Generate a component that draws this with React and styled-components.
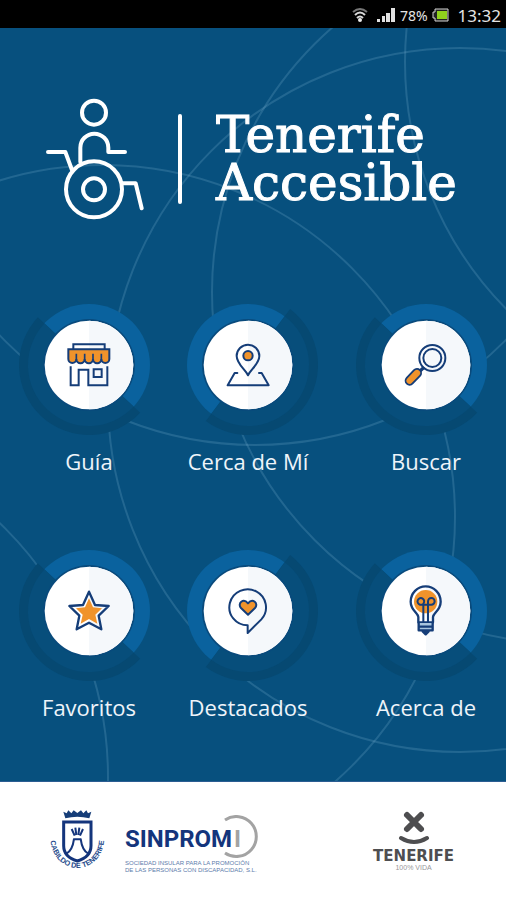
import React from "react";
import styled, { createGlobalStyle } from "styled-components";

const NAVY = "#153d78";
const ORANGE = "#f0932b";

const GlobalStyle = createGlobalStyle`
  *, *::before, *::after { box-sizing: border-box; }
  body { margin: 0; background: #07507e; }
`;

const Screen = styled.div`
  min-height: 100vh;
  display: flex;
  flex-direction: column;
  font-family: "Open Sans", "Noto Sans", sans-serif;
`;

const StatusBar = styled.header`
  height: 28px;
  padding: 2px 5px 0 0;
  background: #000;
  color: #e4e4e4;
  display: flex;
  align-items: center;
  justify-content: flex-end;
  font-family: "Noto Sans", sans-serif;
`;

const StatusIcon = styled.svg`
  display: block;
  width: ${(p) => p.$width}px;
  height: 16px;
  margin-right: ${(p) => p.$gap}px;
`;

const Battery = styled.span`
  font-size: 14px;
  margin-right: 4px;
`;

const Clock = styled.time`
  font-size: 17px;
`;

const Main = styled.main`
  flex: 1;
  position: relative;
  overflow: hidden;
  isolation: isolate;
  background: #07507e;
  color: #fff;
`;

const Backdrop = styled.svg`
  position: absolute;
  z-index: -1;
  inset: 0;
  width: 100%;
  height: 100%;
  fill: none;
  stroke: #8fc3e0;
  stroke-opacity: 0.2;
  stroke-width: 2;
`;

const Brand = styled.div`
  display: flex;
  align-items: center;
  padding: 70px 20px 0 46px;
`;

const BrandMark = styled.svg`
  width: 98px;
  height: 122px;
  fill: none;
  stroke: #fff;
  stroke-width: 12;
  stroke-linecap: round;
  stroke-linejoin: round;
`;

const Divider = styled.span`
  width: 4px;
  height: 90px;
  margin: 0 34px;
  border-radius: 2px;
  background: #fff;
`;

const Title = styled.h1`
  margin: 0;
  font-family: "DejaVu Serif", serif;
  font-size: 50px;
  line-height: 48px;
  font-weight: 400;
  -webkit-text-stroke: 1px #fff;
`;

const Menu = styled.nav`
  display: grid;
  grid-template-columns: 178fr 140fr 178fr;
  justify-items: center;
  row-gap: 64px;
  padding: 75px 10px 57px 0;
`;

const Tile = styled.button`
  display: flex;
  flex-direction: column;
  align-items: center;
  gap: 10px;
  width: 140px;
  padding: 0;
  border: 0;
  background: none;
  color: #eef4fa;
  font: inherit;
  font-size: 22px;
  line-height: 32px;
  white-space: nowrap;
  cursor: pointer;

  &:nth-child(3n) {
    justify-self: end;
  }
`;

const Dial = styled.svg`
  display: block;
  width: 140px;
  height: 140px;
`;

const Footer = styled.footer`
  min-height: 119px;
  padding: 27px 52px 0 47px;
  background: #fff;
  border-top: 1px solid #2b5d92;
  display: flex;
  align-items: flex-start;
`;

const Emblem = styled.svg`
  width: 60px;
  height: 66px;
`;

const Sinpromi = styled.div`
  margin: 6px 0 0 18px;
  color: #5c7bab;
  font-family: "Liberation Sans", sans-serif;
  font-size: 6px;
  line-height: 7px;
`;

const Wordmark = styled.svg`
  display: block;
  width: 134px;
  height: 44px;
  font-family: Roboto, sans-serif;
  font-weight: 700;
  font-size: 24px;
`;

const Caption = styled.p`
  margin: 1px 0 0;
  white-space: nowrap;
`;

const Tenerife = styled.div`
  margin-left: auto;
  display: flex;
  flex-direction: column;
  align-items: center;
  color: #4e4e50;
  font-family: "DejaVu Sans", sans-serif;
`;

const Smile = styled.svg`
  width: 34px;
  height: 36px;
  margin-top: 1px;
  fill: none;
  stroke: #4e4e50;
  stroke-linecap: round;
`;

const PlaceName = styled.strong`
  font-size: 15px;
  line-height: 16px;
  margin-top: 2px;
`;

const Slogan = styled.small`
  font-family: "Liberation Sans", sans-serif;
  font-size: 7px;
  line-height: 8px;
  color: #98989a;
`;

const line = {
  fill: "none",
  stroke: NAVY,
  strokeWidth: 7,
  strokeLinejoin: "round",
  strokeLinecap: "round",
};

const ShopIcon = () => (
  <g {...line} strokeWidth="6" strokeLinejoin="miter" strokeLinecap="butt">
    <path d="M-47-48V-62H47V-48" />
    <path
      fill={ORANGE}
      d="M-62-47H61V-18a12 12 0 0 1-24 0a12 12 0 0 1-25 0a12 12 0 0 1-25 0a12 12 0 0 1-25 0a12 12 0 0 1-24 0Z"
    />
    <path strokeWidth="5" d="M-38-34V-16M-13-34V-16M12-34V-16M37-34V-16" />
    <path d="M-55 4V61H-31V14H-2V61H55V4M14 13H38V36H14Z" />
  </g>
);

const PinIcon = () => (
  <g {...line} strokeWidth="6">
    <path d="M0 31C-8 14-34-4-34-27A34 34 0 0 1 34-27C34-4 8 14 0 31Z" />
    <circle cy="-28" r="14" fill={ORANGE} />
    <path d="M-32 24H-40L-61 61H62L41 24H33" />
  </g>
);

const SearchIcon = () => (
  <g {...line} strokeWidth="6">
    <circle cx="19" cy="-21" r="39" />
    <circle cx="19" cy="-21" r="27" />
    <path d="M-9 10L-18 18" strokeWidth="10" />
    <path d="M-27 24L-49 47" strokeWidth="30" />
    <path d="M-27 24L-49 47" strokeWidth="19" stroke={ORANGE} />
  </g>
);

const StarIcon = () => (
  <g {...line}>
    <path d="M0-58L18-18L59-15L29 14L37 55L0 35L-37 55L-29 14L-59-15L-18-18Z" />
    <path
      fill={ORANGE}
      stroke="none"
      d="M0-38L12-11L39-8L19 11L25 38L0 24L-25 38L-19 11L-39-8L-12-11Z"
    />
  </g>
);

const HeartIcon = () => (
  <g {...line} strokeWidth="6">
    <path d="M-1 43A55 54 0 1 1 40 25L-1 66Z" />
    <path
      fill={ORANGE}
      d="M0 11L-21-9C-33-23-14-40 0-23C14-40 33-23 21-9Z"
    />
  </g>
);

const BulbIcon = () => (
  <g {...line}>
    <circle cx="-1" cy="-28" r="35" fill={ORANGE} stroke="none" />
    <path d="M-23 34V18C-23 7-46-2-46-28A45 46 0 0 1 44-28C44-2 21 7 21 18V34Z" />
    <path d="M-8 32V-22A10 10 0 1 0-18-19H16A10 10 0 1 0 6-29V32" strokeWidth="6" />
    <path d="M-22 36V58H20V36M-22 47H20M-10 61L-1 70L8 61Z" fill="#a9c6df" />
  </g>
);

const items = [
  { label: "Guía", Icon: ShopIcon, angle: 43 },
  { label: "Cerca de Mí", Icon: PinIcon, angle: -53 },
  { label: "Buscar", Icon: SearchIcon, angle: 43 },
  { label: "Favoritos", Icon: StarIcon, angle: 43 },
  { label: "Destacados", Icon: HeartIcon, angle: -53 },
  { label: "Acerca de", Icon: BulbIcon, angle: 43 },
];

function MenuTile({ label, Icon, angle }) {
  return (
    <Tile type="button">
      <Dial viewBox="-210 -210 420 420" aria-hidden="true">
        <circle r="183" fill="#0a629e" />
        <g transform={`rotate(${angle})`}>
          <path d="M-210 0A210 210 0 0 0 210 0Z" fill="#064972" />
          <path d="M-183 0A183 183 0 0 0 183 0Z" fill="#074e7b" />
        </g>
        <circle r="138" fill="#094a7c" />
        <circle r="133" fill="#fff" />
        <path d="M0-133A133 133 0 0 1 0 133Z" fill="#f5f8fb" />
        <Icon />
      </Dial>
      {label}
    </Tile>
  );
}

export default function App() {
  return (
    <Screen>
      <GlobalStyle />
      <StatusBar>
        <StatusIcon $width={16} $gap={9} viewBox="0 0 16 16" aria-label="Wi-Fi">
          <g fill="none" stroke="#d8d8d8" strokeWidth="2">
            <path d="M1 5Q8-1 15 5" stroke="#777" />
            <path d="M3 8Q8 3 13 8" />
            <path d="M5 11Q8 8 11 11" />
          </g>
          <circle cx="8" cy="13" r="2" fill="#eee" />
        </StatusIcon>
        <StatusIcon $width={18} $gap={5} viewBox="0 0 18 16" aria-label="Señal">
          <path d="M0 12h3v3H0zM5 9h3v6H5zM9 6h4v9H9zM14 1h4v14h-4z" fill="#e2e2e2" />
        </StatusIcon>
        <Battery>78%</Battery>
        <StatusIcon $width={17} $gap={9} viewBox="0 0 17 16" aria-label="Batería">
          <path d="M3 2H16V14H3V11H1V5H3Z" fill="#222" stroke="#d5d5d5" strokeWidth="1" />
          <path d="M5 4h10v8H5z" fill="#8fd21c" />
        </StatusIcon>
        <Clock>13:32</Clock>
      </StatusBar>

      <Main>
        <Backdrop viewBox="0 28 506 753" preserveAspectRatio="xMidYMin slice" aria-hidden="true">
          <circle cx="460" cy="400" r="352" />
          <circle cx="563" cy="292" r="351" />
          <circle cx="103" cy="517" r="352" />
          <circle cx="255" cy="93" r="352" />
          <circle cx="757" cy="62" r="352" />
          <circle cx="-244" cy="777" r="352" />
        </Backdrop>

        <Brand>
          <BrandMark viewBox="48 54 294 366" aria-hidden="true">
            <circle cx="192" cy="98" r="36" />
            <path d="M151 246V203A42 42 0 0 1 235 203V216H285" />
            <path d="M54 216H106L126 270" />
            <circle cx="192" cy="328" r="84" />
            <circle cx="192" cy="328" r="33" />
            <path d="M277 310H317L335 385" />
          </BrandMark>
          <Divider />
          <Title>
            Tenerife
            <br />
            Accesible
          </Title>
        </Brand>

        <Menu aria-label="Menú principal">
          {items.map((item) => (
            <MenuTile key={item.label} {...item} />
          ))}
        </Menu>
      </Main>

      <Footer>
        <Emblem viewBox="49 88 180 198" role="img" aria-label="Cabildo de Tenerife">
          <path
            d="M104 116L98 96L108 101L113 92L122 101L129 92L140 100L151 92L158 101L167 92L172 101L182 96L176 116Q140 107 104 116Z"
            fill={NAVY}
          />
          <path
            d="M99 127H181V198C181 224 160 238 140 244C120 238 99 224 99 198Z"
            fill="none"
            stroke="#14357c"
            strokeWidth="9"
          />
          <path
            d="M130 178C127 200 119 216 107 222M150 178C153 200 161 216 173 222M128 179H152M132 168L123 148M137 166L134 144M143 166L146 144M148 168L157 148"
            fill="none"
            stroke="#14357c"
            strokeWidth="6"
          />
          <path id="emblem-arc" d="M64 152A80 86 0 1 0 216 152" fill="none" />
          <text
            fill="#244a8b"
            fontFamily="Liberation Sans, sans-serif"
            fontWeight="700"
            fontSize="22"
          >
            <textPath href="#emblem-arc" startOffset="50%" textAnchor="middle">
              CABILDO DE TENERIFE
            </textPath>
          </text>
        </Emblem>

        <Sinpromi>
          <Wordmark viewBox="0 0 134 44" role="img" aria-label="Sinpromi">
            <path
              d="M100 5A20 20 0 1 1 100 38"
              fill="none"
              stroke="#a3a3a3"
              strokeWidth="3"
            />
            <text x="0" y="32" fill="#14357c">SINPROM</text>
            <text x="109" y="32" fill="#a3a3a3">I</text>
          </Wordmark>
          <Caption>
            SOCIEDAD INSULAR PARA LA PROMOCIÓN
            <br />
            DE LAS PERSONAS CON DISCAPACIDAD, S.L.
          </Caption>
        </Sinpromi>

        <Tenerife>
          <Smile viewBox="0 0 34 36" aria-hidden="true">
            <path d="M10 5L24 19M24 5L10 19" strokeWidth="6" />
            <path d="M4 28Q17 36 30 28" strokeWidth="4" />
          </Smile>
          <PlaceName>TENERIFE</PlaceName>
          <Slogan>100% VIDA</Slogan>
        </Tenerife>
      </Footer>
    </Screen>
  );
}
